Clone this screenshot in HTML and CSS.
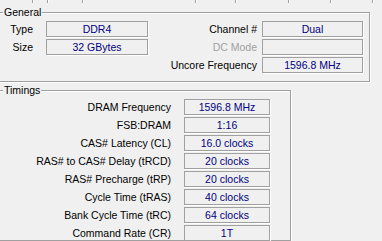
FILE: index.html
```html
<!DOCTYPE html>
<html>
<head>
<meta charset="utf-8">
<link rel="stylesheet" href="styles.css">
</head>
<body>
<div class="strip"><span></span><span></span><span></span><span></span><span></span><span></span><span></span><span></span></div>

<section class="group general">
  <div class="legend">General</div>
  <div class="gen-grid">
    <div class="lbl l1">Type</div><div class="val">DDR4</div><div class="lbl l2">Channel #</div><div class="val">Dual</div>
    <div class="lbl l1">Size</div><div class="val">32 GBytes</div><div class="lbl l2 dis">DC Mode</div><div class="val"></div>
    <div></div><div></div><div class="lbl l2">Uncore Frequency</div><div class="val">1596.8 MHz</div>
  </div>
</section>

<section class="group timings">
  <div class="legend">Timings</div>
  <div class="tim-grid">
    <div class="lbl l3">DRAM Frequency</div><div class="val">1596.8 MHz</div>
    <div class="lbl l3">FSB:DRAM</div><div class="val">1:16</div>
    <div class="lbl l3">CAS# Latency (CL)</div><div class="val">16.0 clocks</div>
    <div class="lbl l3">RAS# to CAS# Delay (tRCD)</div><div class="val">20 clocks</div>
    <div class="lbl l3">RAS# Precharge (tRP)</div><div class="val">20 clocks</div>
    <div class="lbl l3">Cycle Time (tRAS)</div><div class="val">40 clocks</div>
    <div class="lbl l3">Bank Cycle Time (tRC)</div><div class="val">64 clocks</div>
    <div class="lbl l3">Command Rate (CR)</div><div class="val">1T</div>
  </div>
</section>
</body>
</html>
```

FILE: styles.css
```css
html, body {
  margin: 0;
  padding: 0;
}
body {
  width: 382px;
  height: 241px;
  overflow: hidden;
  background: #f0f0f0;
  font-family: "Liberation Sans", Arial, sans-serif;
  font-size: 10.5px;
  color: #000;
}

.strip {
  display: flex;
  height: 3px;
}
.strip span {
  flex: none;
  box-sizing: border-box;
  height: 3px;
  border-right: 1px solid #a0a0a0;
  box-shadow: 1px 0 0 #fff;
}
.strip span:nth-child(1) { width: 33px; }
.strip span:nth-child(2) { width: 15px; }
.strip span:nth-child(3) { width: 35px; }
.strip span:nth-child(4) { width: 113px; }
.strip span:nth-child(5) { width: 40px; }
.strip span:nth-child(6) { width: 53px; }
.strip span:nth-child(7) { width: 42px; }
.strip span:nth-child(8) { width: 42px; }

.group {
  box-sizing: border-box;
  border: 1px solid #a0a0a0;
  box-shadow: inset 1px 1px 0 #fff, 1px 1px 0 #fff;
  margin-left: -2px;
}
.legend {
  width: max-content;
  height: 13px;
  line-height: 13px;
  margin: -7px 0 0 4px;
  padding: 0 1px;
  background: #f0f0f0;
}

.general {
  margin-top: 9px;
  width: 372px;
  height: 70px;
}
.gen-grid {
  display: grid;
  grid-template-columns: 47px 102px 114px 101px;
  grid-auto-rows: 16px;
  row-gap: 2px;
  margin-top: 2px;
}

.timings {
  margin-top: 8px;
  width: 293px;
  height: 151px;
}
.tim-grid {
  display: grid;
  grid-template-columns: 185px 86px;
  grid-auto-rows: 16px;
  row-gap: 2px;
  margin-top: 2px;
}

.lbl {
  text-align: right;
  line-height: 16px;
  white-space: nowrap;
}
.l1 { padding-right: 13px; }
.l2 { padding-right: 5px; }
.l3 { padding-right: 13px; }
.dis { color: #a0a0a0; }

.val {
  box-sizing: border-box;
  height: 16px;
  border: 1px solid #a0a0a0;
  box-shadow: 1px 1px 0 #fff;
  text-align: center;
  line-height: 14px;
  color: #000080;
  white-space: nowrap;
}
```
